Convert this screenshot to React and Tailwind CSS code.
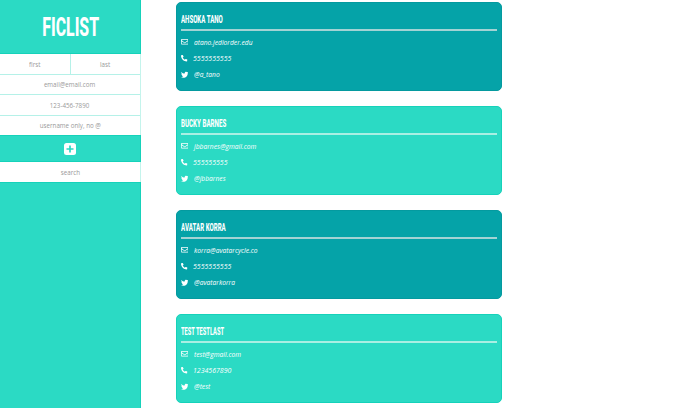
import { FaTwitter, FaPhone, FaRegEnvelope } from "react-icons/fa";

const contacts = [
  { name: "AHSOKA TANO", email: "atano.jediorder.edu", phone: "5555555555", handle: "@a_tano", bg: "bg-[#05a3a8] border-[#049a9f]", line: "bg-[#a3d3d4]", fit: "scale-x-[0.585]" },
  { name: "BUCKY BARNES", email: "jbbarnes@gmail.com", phone: "555555555", handle: "@jbbarnes", bg: "bg-[#2bdac4] border-[#16d2ba]", line: "bg-[#a9efe3]", fit: "scale-x-[0.595]" },
  { name: "AVATAR KORRA", email: "korra@avatarcycle.co", phone: "5555555555", handle: "@avatarkorra", bg: "bg-[#05a3a8] border-[#049a9f]", line: "bg-[#a3d3d4]", fit: "scale-x-[0.59]" },
  { name: "TEST TESTLAST", email: "test@gmail.com", phone: "1234567890", handle: "@test", bg: "bg-[#2bdac4] border-[#16d2ba]", line: "bg-[#a9efe3]", fit: "scale-x-[0.55]" },
];

function PlusSquare() {
  return (
    <svg width="12" height="12" viewBox="0 0 12 12" className="text-white">
      <rect width="12" height="12" rx="2.5" fill="currentColor" />
      <path d="M6 2.5v7M2.5 6h7" stroke="#2bdac4" strokeWidth="1.7" />
    </svg>
  );
}

function Field({ children, className = "" }) {
  return (
    <div className={`flex items-center justify-center bg-white pt-px text-[7.4px] leading-none text-[#999] ${className}`}>
      <span className="scale-x-[0.84] whitespace-nowrap">{children}</span>
    </div>
  );
}

function Detail({ icon, children, className = "" }) {
  return (
    <div className="flex h-[16.2px] items-center text-white">
      <span className="flex w-[8px] shrink-0 justify-start">{icon}</span>
      <span className={`origin-left whitespace-nowrap text-[8px] leading-none font-medium italic ${className}`}>{children}</span>
    </div>
  );
}

function Card({ c }) {
  return (
    <article className={`h-[89px] shrink-0 rounded-[5px] border pr-1 pl-[3.5px] ${c.bg}`}>
      <div className="flex h-[26px] items-end pb-[3px]">
        <h2 className={`origin-left whitespace-nowrap font-['Roboto'] text-[10.4px] leading-[12px] font-extrabold text-white ${c.fit}`}>{c.name}</h2>
      </div>
      <div className={`h-[1.5px] ${c.line}`} />
      <div className="pt-[3.5px]">
        <Detail icon={<FaRegEnvelope size={7.5} />} className="ml-[5.5px] scale-x-[0.835]">{c.email}</Detail>
        <Detail icon={<FaPhone size={6.5} className="-scale-x-100" />} className="ml-[4.5px] scale-x-[0.87]">{c.phone}</Detail>
        <Detail icon={<FaTwitter size={7.5} />} className="ml-[5.5px] scale-x-[0.835]">{c.handle}</Detail>
      </div>
    </article>
  );
}

export default function App() {
  return (
    <div className="flex h-[408px] w-[700px] overflow-hidden bg-white font-['Open_Sans',sans-serif]">
      <aside className="flex w-[141px] shrink-0 flex-col border-r border-[#16d2ba] bg-[#2bdac4]">
        <header className="flex h-[54px] items-center justify-center border-b border-[#16d2ba] pt-[2px] pl-px">
          <h1 className="scale-x-[0.62] font-['Roboto'] text-[25.5px] leading-none font-extrabold text-white">FICLIST</h1>
        </header>
        <div className="-mr-px flex flex-col border-r border-[#c4f4ec]">
          <div className="flex h-[21px] border-b border-[#b5f1e8]">
            <Field className="w-[71px] border-r border-[#b5f1e8]">first</Field>
            <Field className="flex-1">last</Field>
          </div>
          <Field className="h-5 border-b border-[#b5f1e8]">email@email.com</Field>
          <Field className="h-[21px] border-b border-[#b5f1e8]">123-456-7890</Field>
          <Field className="h-[19px]">username only, no @</Field>
        </div>
        <button className="flex h-[27px] items-center justify-center border-y border-[#16d2ba] pt-px text-white">
          <PlusSquare />
        </button>
        <div className="-mr-px border-r border-[#c4f4ec]">
          <Field className="h-5">search</Field>
        </div>
        <div className="h-px bg-[#16d2ba]" />
      </aside>
      <main className="ml-[35px] flex w-[326px] flex-col gap-[15px] pt-[2px]">
        {contacts.map((c) => <Card key={c.name} c={c} />)}
      </main>
    </div>
  );
}
